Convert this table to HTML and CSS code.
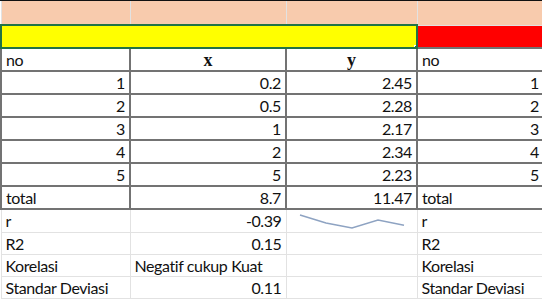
FILE: index.html
```html
<!DOCTYPE html>
<html lang="id">
<head>
  <meta charset="utf-8">
  <link rel="stylesheet" href="styles.css">
</head>
<body>
<div class="sheet">
  <table class="grid">
    <colgroup>
      <col class="col-a">
      <col class="col-b">
      <col class="col-c">
      <col class="col-d">
    </colgroup>
    <tr class="row-head">
      <td class="peach"></td>
      <td class="peach"></td>
      <td class="peach"></td>
      <td class="peach"></td>
    </tr>
    <tr class="row-band">
      <td class="yellow" colspan="3"><span class="handle"></span></td>
      <td class="red"></td>
    </tr>
    <tr class="data">
      <td>no</td>
      <td class="var">x</td>
      <td class="var">y</td>
      <td>no</td>
    </tr>
    <tr class="data">
      <td class="num">1</td>
      <td class="num">0.2</td>
      <td class="num">2.45</td>
      <td class="num">1</td>
    </tr>
    <tr class="data">
      <td class="num">2</td>
      <td class="num">0.5</td>
      <td class="num">2.28</td>
      <td class="num">2</td>
    </tr>
    <tr class="data">
      <td class="num">3</td>
      <td class="num">1</td>
      <td class="num">2.17</td>
      <td class="num">3</td>
    </tr>
    <tr class="data">
      <td class="num">4</td>
      <td class="num">2</td>
      <td class="num">2.34</td>
      <td class="num">4</td>
    </tr>
    <tr class="data">
      <td class="num">5</td>
      <td class="num">5</td>
      <td class="num">2.23</td>
      <td class="num">5</td>
    </tr>
    <tr class="data">
      <td>total</td>
      <td class="num">8.7</td>
      <td class="num">11.47</td>
      <td>total</td>
    </tr>
    <tr class="stat">
      <td>r</td>
      <td class="num">-0.39</td>
      <td class="spark">
        <svg width="130" height="22" viewBox="0 0 130 22">
          <polyline points="13,5 39,12.9 65,18 91,10.1 117,15.2" fill="none" stroke="#8ea3c2" stroke-width="1.5"/>
        </svg>
      </td>
      <td>r</td>
    </tr>
    <tr class="stat">
      <td>R2</td>
      <td class="num">0.15</td>
      <td></td>
      <td>R2</td>
    </tr>
    <tr class="stat">
      <td>Korelasi</td>
      <td>Negatif cukup Kuat</td>
      <td></td>
      <td>Korelasi</td>
    </tr>
    <tr class="stat">
      <td>Standar Deviasi</td>
      <td class="num">0.11</td>
      <td></td>
      <td>Standar Deviasi</td>
    </tr>
  </table>
</div>
</body>
</html>
```

FILE: styles.css
```css
body {
  margin: 0;
  overflow: hidden;
  background: #fff;
}

.sheet {
  border-top: 1px solid #111;
  font-family: Lato, "Liberation Sans", sans-serif;
  font-size: 16px;
  letter-spacing: -0.4px;
  color: #111;
}

.grid {
  border-collapse: collapse;
  table-layout: fixed;
  width: 543px;
}

.col-a { width: 129px; }
.col-b { width: 156px; }
.col-c { width: 131px; }
.col-d { width: 127px; }

.grid td {
  border: 1px solid #e2e2e2;
  padding: 0 4px;
  white-space: nowrap;
  overflow: hidden;
  line-height: 20px;
}

.row-head td {
  height: 23px;
  border-top: none;
}

.peach {
  background: #f8cbad;
}

.row-band td {
  height: 21px;
  padding: 0;
}

.yellow {
  background: #ffff00;
  border: 2px solid #217346 !important;
  position: relative;
}

/* fill handle on the selection corner */
.handle {
  position: absolute;
  right: -5px;
  bottom: -5px;
  width: 5px;
  height: 5px;
  background: #217346;
  border: 1px solid #fff;
}

.red {
  background: #ff0000;
}

.data td {
  height: 21px;
  border: 2px solid #737373;
}

.stat td {
  height: 21px;
}

.num {
  text-align: right;
}

.var {
  text-align: center;
  font-family: "Liberation Serif", serif;
  font-weight: bold;
  font-size: 18px;
  letter-spacing: 0;
}

.spark {
  padding: 0 !important;
}

.spark svg {
  display: block;
}
```
